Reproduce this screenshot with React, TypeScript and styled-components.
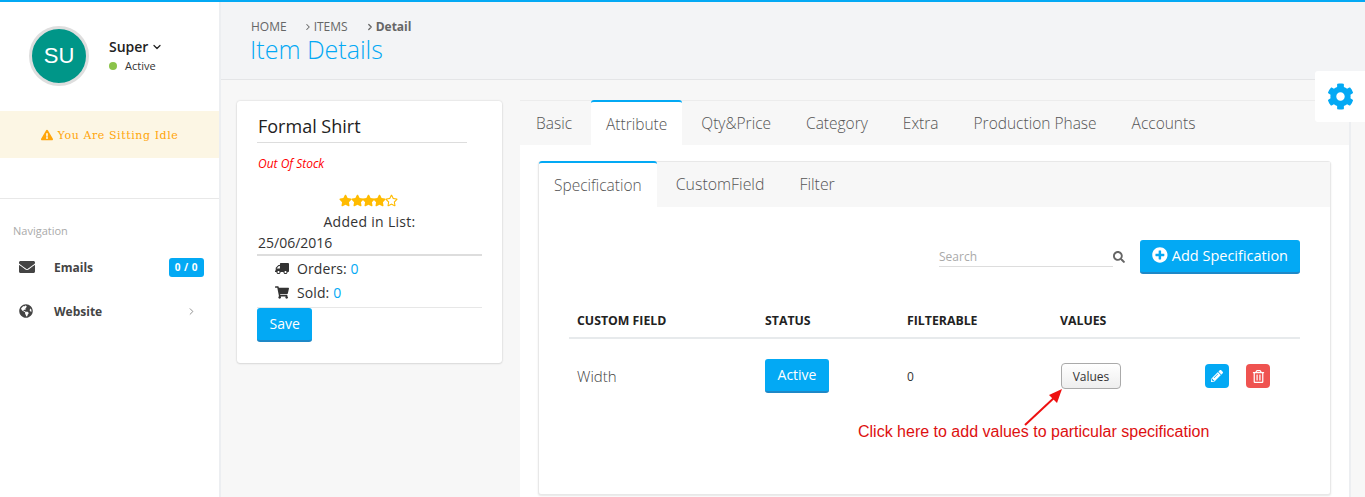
import styled, { createGlobalStyle } from "styled-components";
import { ChevronDown, ChevronRight } from "lucide-react";
import {
  FaCog,
  FaEnvelope,
  FaExclamationTriangle,
  FaGlobeAmericas,
  FaPencilAlt,
  FaPlusCircle,
  FaRegStar,
  FaRegTrashAlt,
  FaSearch,
  FaShoppingCart,
  FaStar,
  FaTruck,
} from "react-icons/fa";

const GlobalStyle = createGlobalStyle`
  html, body {
    margin:0;
    height:497px;
    overflow:hidden;
    background:#f7f7f7;
    font-family:"Open Sans", sans-serif;
    color:#333;
  }
  * { box-sizing:border-box; }
`;

const Page = styled.div`
  display:flex;
  position:relative;
  height:497px;
  border-top:2px solid #03a9f4;
  overflow:hidden;
`;

const Sidebar = styled.aside`
  width:221px;
  flex:none;
  background:#fff;
  border-right:2px solid #eceef1;
`;

const Profile = styled.div`
  display:flex;
  align-items:flex-start;
  gap:20px;
  padding:24px 0 0 29px;
  height:109px;
`;

const Avatar = styled.div`
  width:60px;
  height:60px;
  border-radius:50%;
  background:#009688;
  border:3px solid #dedede;
  color:#fff;
  font:22px "Liberation Sans", sans-serif;
  display:flex;
  align-items:center;
  justify-content:center;
`;

const ProfileInfo = styled.div`
  padding-top:11px;
`;

const UserName = styled.div`
  display:flex;
  align-items:center;
  gap:3px;
  font-size:14px;
  font-weight:600;
  line-height:20px;
  margin-bottom:1px;
  color:#222;
`;

const UserStatus = styled.div`
  display:flex;
  align-items:center;
  gap:8px;
  font-size:11px;
  line-height:16px;
  color:#333;
`;

const StatusDot = styled.span`
  width:8px;
  height:8px;
  border-radius:50%;
  background:#8bc34a;
`;

const IdleBanner = styled.div`
  height:47px;
  background:#fcf6e4;
  color:#ffa50a;
  font:11px "DejaVu Serif", serif;
  letter-spacing:.58px;
  display:flex;
  align-items:center;
  justify-content:center;
  gap:5px;
  padding-top:1px;
`;

const NavSection = styled.nav`
  margin-top:40px;
  border-top:1px solid #e8e8e8;
  padding-top:24px;
`;

const NavLabel = styled.div`
  font-size:11px;
  line-height:16px;
  color:#aaa;
  padding-left:13px;
  margin-bottom:6px;
`;

const NavItem = styled.div`
  display:flex;
  align-items:center;
  height:44px;
  padding:0 15px 0 19px;
  font-size:12px;
  font-weight:700;
  color:#444;
  svg { flex:none; }
`;

const NavText = styled.span<{ $wide?: boolean }>`
  margin-left:${(p) => (p.$wide ? "21px" : "19px")};
  flex:1;
`;

const Badge = styled.span`
  background:#03a9f4;
  color:#fff;
  font-size:10px;
  font-weight:700;
  border-radius:3px;
  padding:2px 6px;
  line-height:15px;
  letter-spacing:.5px;
`;

const NavArrow = styled(ChevronRight)`
  margin-right:7px;
  color:#888;
`;

const Main = styled.main`
  flex:1;
  min-width:0;
`;

const Header = styled.header`
  height:78px;
  background:#f3f4f6;
  border-bottom:1px solid #e4e5e7;
  padding:16px 0 0 30px;
`;

const Crumbs = styled.div`
  display:flex;
  align-items:center;
  font-size:12px;
  line-height:17px;
  color:#666;
`;

const Crumb = styled.span<{ $bold?: boolean }>`
  display:flex;
  align-items:center;
  margin-left:${(p) => (p.$bold ? "17px" : "16px")};
  font-weight:${(p) => (p.$bold ? 700 : 400)};
  &:first-child { margin-left:0; }
  svg { margin-right:1px; }
`;

const PageTitle = styled.h1`
  margin:0 0 0 -1px;
  font-size:25px;
  font-weight:300;
  line-height:28px;
  color:#03a9f4;
`;

const Content = styled.div`
  display:flex;
  align-items:flex-start;
  gap:18px;
  padding:21px 14px 0 16px;
`;

const ItemCard = styled.section`
  width:265px;
  flex:none;
  height:262px;
  background:#fff;
  border-radius:3px;
  box-shadow:0 0 2px rgba(0,0,0,.18), 0 1px 2px rgba(0,0,0,.08);
  padding:10px 20px 0 20px;
`;

const ItemName = styled.h2`
  margin:0;
  width:210px;
  padding-left:1px;
  font-size:18px;
  font-weight:400;
  line-height:31px;
  color:#222;
  border-bottom:1px solid #ddd;
`;

const StockNote = styled.div`
  font-size:12px;
  font-style:italic;
  color:#f00;
  line-height:18px;
  margin-top:12px;
  padding-left:1px;
`;

const Stars = styled.div`
  display:flex;
  justify-content:center;
  align-items:center;
  margin-top:20px;
  height:14px;
  padding-right:2px;
  color:#ffbb00;
  font-size:13px;
  svg { margin:0 -0.8px; }
`;

const AddedLabel = styled.div`
  text-align:center;
  font-size:14px;
  letter-spacing:.3px;
  line-height:21px;
  margin-top:4px;
  color:#333;
`;

const AddedDate = styled.div`
  font-size:14px;
  line-height:21px;
  padding:0 0 1px 1px;
  border-bottom:2px solid #ddd;
`;

const StatList = styled.div`
  padding-bottom:3px;
  border-bottom:1px solid #e7e7e7;
`;

const StatRow = styled.div`
  display:flex;
  align-items:center;
  padding-left:18px;
  gap:8px;
  height:24px;
  font-size:14px;
  letter-spacing:.1px;
  color:#333;
  svg { flex:none; width:14px; }
`;

const TruckIcon = styled(FaTruck)`
  transform:scaleX(-1);
`;

const StatValue = styled.span`
  color:#03a9f4;
`;

const PrimaryButton = styled.button`
  display:inline-flex;
  align-items:center;
  border:0;
  border-bottom:2px solid #1e88c7;
  border-radius:3px;
  background:#03a9f4;
  color:#fff;
  font:14px "Open Sans", sans-serif;
  padding:0 12.5px 2px;
  height:34px;
`;

const TabsCard = styled.section<{ $inner?: boolean }>`
  background:#fff;
  border:${(p) => (p.$inner ? "1px solid #e8e8e8" : "0")};
  border-radius:3px;
  flex:1;
  min-width:0;
  ${(p) => (p.$inner ? "height:334px; box-shadow:0 1px 2px rgba(0,0,0,.1);" : "height:400px; border-right:2px solid #eceef1; margin-top:-1px;")}
`;

const TabBar = styled.div<{ $inner?: boolean }>`
  display:flex;
  background:#f7f7f7;
  height:45px;
  border-top:${(p) => (p.$inner ? "0" : "1px solid #ececec")};
`;

const Tab = styled.div<{ $active?: boolean; $inner?: boolean }>`
  padding:0 15px;
  margin-right:${(p) => (p.$active ? "4px" : "5px")};
  font-size:${(p) => (p.$inner && !p.$active ? "15.9px" : "15.5px")};
  font-weight:300;
  color:#555;
  display:flex;
  align-items:center;
  height:${(p) => (p.$active ? "46px" : "44px")};
  margin-top:${(p) => (p.$active ? "-1px" : "0")};
  background:${(p) => (p.$active ? "#fff" : "transparent")};
  border-top:${(p) => (p.$active ? "2px solid #03a9f4" : "0")};
  border-radius:${(p) => (p.$active ? "3px 3px 0 0" : "0")};
  &:first-child { padding-left:${(p) => (p.$active ? "15px" : "16px")}; margin-right:4px; }
`;

const TabBody = styled.div`
  padding:16px 18px 0 18px;
`;

const InnerBody = styled.div`
  padding:33px 30px 0 30px;
`;

const Toolbar = styled.div`
  display:flex;
  justify-content:flex-end;
  align-items:center;
  gap:15px;
`;

const SearchBox = styled.div`
  display:flex;
  align-items:center;
  color:#666;
`;

const SearchInput = styled.input`
  width:174px;
  height:20px;
  border:0;
  border-bottom:1px solid #ddd;
  outline:none;
  padding:0;
  font:12px "Open Sans", sans-serif;
  &::placeholder { color:#aaa; opacity:1; }
`;

const AddButton = styled(PrimaryButton)`
  gap:4px;
  padding:0 12px 2px;
  width:160px;
  font-size:14.5px;
  white-space:nowrap;
`;

const TableGrid = styled.div`
  display:grid;
  grid-template-columns:188px 142px 153px 145px 41px 1fr;
  align-items:center;
`;

const TableHead = styled(TableGrid)`
  margin-top:38px;
  height:27px;
  border-bottom:2px solid #e7eaec;
  font-size:12.3px;
  font-weight:700;
  color:#222;
  padding:0 0 8px 8px;
`;

const TableRow = styled(TableGrid)`
  height:74px;
  padding-left:8px;
  font-size:14px;
  color:#444;
`;

const FieldName = styled.span`
  font-size:15px;
  color:#444;
  font-weight:300;
  margin-top:-1px;
`;

const SmallValue = styled.span`
  font-size:12px;
  color:#333;
`;

const ValuesButton = styled.button`
  width:60px;
  height:26px;
  margin-left:1px;
  border:1px solid #aaa;
  border-radius:4px;
  background:linear-gradient(#fff,#eee);
  color:#333;
  font:12px "Open Sans", sans-serif;
  padding:0;
`;

const IconButton = styled.button<{ $color: string }>`
  width:24px;
  height:24px;
  border:0;
  border-radius:4px;
  background:${(p) => p.$color};
  color:#fff;
  padding:0;
  display:flex;
  align-items:center;
  justify-content:center;
`;

const StatusButton = styled(PrimaryButton)`
  width:64px;
  justify-content:center;
  padding:0 0 2px;
  font-size:14px;
`;

const GearTab = styled.div`
  position:absolute;
  top:69px;
  right:0;
  width:50px;
  height:51px;
  background:#fff;
  border-radius:3px 0 0 3px;
  color:#03a9f4;
  display:flex;
  align-items:center;
  justify-content:center;
`;

const Annotation = styled.div`
  position:absolute;
  left:858px;
  top:420px;
  font:16px/19px "Liberation Sans", sans-serif;
  color:#dd1010;
  white-space:nowrap;
`;

const ArrowMark = styled.svg`
  position:absolute;
  left:1020px;
  top:382px;
`;

export default function App() {
  return (
    <>
      <GlobalStyle />
      <Page>
        <Sidebar>
          <Profile>
            <Avatar>SU</Avatar>
            <ProfileInfo>
              <UserName>
                Super <ChevronDown size={12} strokeWidth={2.5} />
              </UserName>
              <UserStatus>
                <StatusDot />
                Active
              </UserStatus>
            </ProfileInfo>
          </Profile>
          <IdleBanner>
            <FaExclamationTriangle size={12} />
            You Are Sitting Idle
          </IdleBanner>
          <NavSection>
            <NavLabel>Navigation</NavLabel>
            <NavItem>
              <FaEnvelope size={16} />
              <NavText>Emails</NavText>
              <Badge>0 / 0</Badge>
            </NavItem>
            <NavItem>
              <FaGlobeAmericas size={14} />
              <NavText $wide>Website</NavText>
              <NavArrow size={11} strokeWidth={2} />
            </NavItem>
          </NavSection>
        </Sidebar>
        <Main>
          <Header>
            <Crumbs>
              <Crumb>HOME</Crumb>
              <Crumb>
                <ChevronRight size={10} strokeWidth={2.5} />
                ITEMS
              </Crumb>
              <Crumb $bold>
                <ChevronRight size={10} strokeWidth={3} />
                Detail
              </Crumb>
            </Crumbs>
            <PageTitle>Item Details</PageTitle>
          </Header>
          <Content>
            <ItemCard>
              <ItemName>Formal Shirt</ItemName>
              <StockNote>Out Of Stock</StockNote>
              <Stars>
                <FaStar />
                <FaStar />
                <FaStar />
                <FaStar />
                <FaRegStar />
              </Stars>
              <AddedLabel>Added in List:</AddedLabel>
              <AddedDate>25/06/2016</AddedDate>
              <StatList>
                <StatRow>
                  <TruckIcon size={13} />
                  <span>
                    Orders: <StatValue>0</StatValue>
                  </span>
                </StatRow>
                <StatRow>
                  <FaShoppingCart size={13} />
                  <span>
                    Sold: <StatValue>0</StatValue>
                  </span>
                </StatRow>
              </StatList>
              <PrimaryButton>Save</PrimaryButton>
            </ItemCard>
            <TabsCard>
              <TabBar>
                <Tab>Basic</Tab>
                <Tab $active>Attribute</Tab>
                <Tab>Qty&amp;Price</Tab>
                <Tab>Category</Tab>
                <Tab>Extra</Tab>
                <Tab>Production Phase</Tab>
                <Tab>Accounts</Tab>
              </TabBar>
              <TabBody>
                <TabsCard $inner>
                  <TabBar $inner>
                    <Tab $inner $active>Specification</Tab>
                    <Tab $inner>CustomField</Tab>
                    <Tab $inner>Filter</Tab>
                  </TabBar>
                  <InnerBody>
                    <Toolbar>
                      <SearchBox>
                        <SearchInput placeholder="Search" />
                        <FaSearch size={12} />
                      </SearchBox>
                      <AddButton>
                        <FaPlusCircle size={16} />
                        Add Specification
                      </AddButton>
                    </Toolbar>
                    <TableHead>
                      <span>CUSTOM FIELD</span>
                      <span>STATUS</span>
                      <span>FILTERABLE</span>
                      <span>VALUES</span>
                    </TableHead>
                    <TableRow>
                      <FieldName>Width</FieldName>
                      <StatusButton>Active</StatusButton>
                      <SmallValue>0</SmallValue>
                      <ValuesButton>Values</ValuesButton>
                      <IconButton $color="#03a9f4">
                        <FaPencilAlt size={12} />
                      </IconButton>
                      <IconButton $color="#ef5350">
                        <FaRegTrashAlt size={13} />
                      </IconButton>
                    </TableRow>
                  </InnerBody>
                </TabsCard>
              </TabBody>
            </TabsCard>
          </Content>
        </Main>
        <GearTab>
          <FaCog size={27} />
        </GearTab>
        <ArrowMark width="48" height="46" viewBox="0 0 48 46">
          <line x1="5" y1="41" x2="36" y2="12" stroke="#ee1111" strokeWidth="2" />
          <polygon points="42,5 37,19 29,11" fill="#ee1111" />
        </ArrowMark>
        <Annotation>Click here to add values to particular specification</Annotation>
      </Page>
    </>
  );
}
